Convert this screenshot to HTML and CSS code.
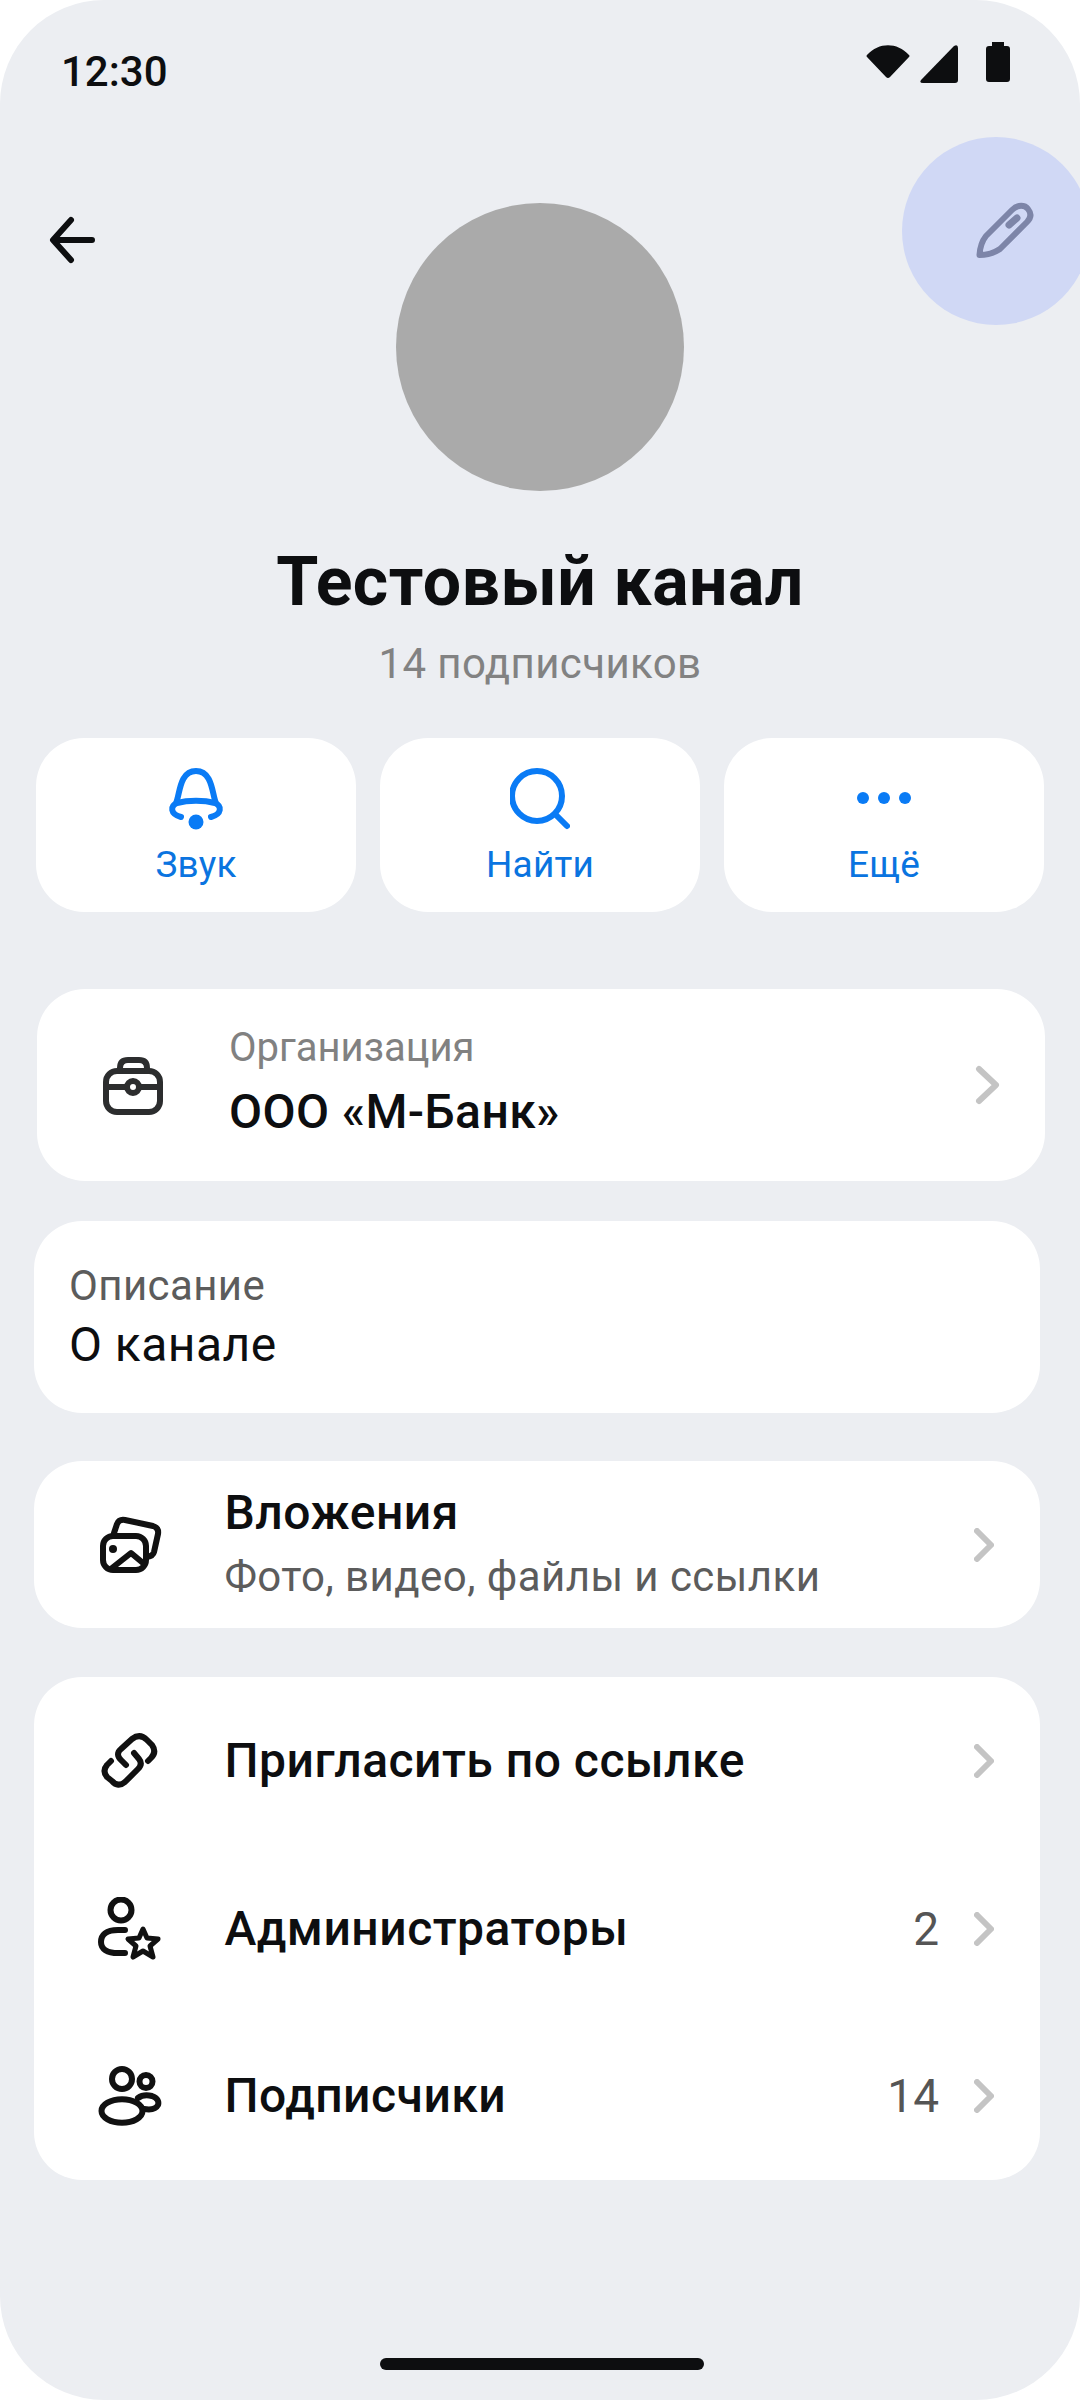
FILE: index.html
```html
<!DOCTYPE html>
<html lang="ru">
<head>
    <meta charset="UTF-8">
    <meta name="viewport" content="width=device-width, initial-scale=1.0">
    <title>Тестовый канал</title>
    <link rel="stylesheet" href="styles.css">
</head>
<body>
    <div class="screen">
        <header class="status-bar">
            <span class="time">12:30</span>
            <div class="status-icons">
                <svg width="44" height="36" viewBox="0 0 44 36"><path d="M1 11 C13 -2 31 -2 43 11 Q44 12 43 13 L24 33 Q22 35 20 33 L1 13 Q0 12 1 11Z" fill="#0d0e10"/></svg>
                <svg width="38" height="38" viewBox="0 0 38 38"><path d="M34 1 Q38 -1 38 3 V35 Q38 38 35 38 H3 Q-1 38 1 35Z" fill="#0d0e10"/></svg>
                <svg width="24" height="40" viewBox="0 0 24 40"><path d="M6 0 H18 V4 H21 Q24 4 24 7 V37 Q24 40 21 40 H3 Q0 40 0 37 V7 Q0 4 3 4 H6Z" fill="#0d0e10"/></svg>
            </div>
        </header>

        <section class="profile">
            <button class="back-btn">
                <svg width="48" height="48" viewBox="0 0 48 48" fill="none" stroke="#0d0e10" stroke-width="6" stroke-linecap="round" stroke-linejoin="round"><path d="M44 24 H6 M23 4 L5 24 L23 44"/></svg>
            </button>
            <div class="edit-btn">
                <svg width="58" height="58" viewBox="0 0 58 58" fill="none" stroke="#7d85a8" stroke-width="6" stroke-linecap="round" stroke-linejoin="round"><path d="M3.5 53 C4 44 6 39 10 34 L36 8 C42 2 49 3 52 7 C56 12 55 16 51 20 L24 47 C18 51 11 53 3.5 53Z"/><path d="M33 23 L41 16" stroke-width="7"/></svg>
            </div>
            <div class="avatar"></div>
            <h1 class="channel-name">Тестовый канал</h1>
            <p class="subs">14 подписчиков</p>
        </section>

        <nav class="actions">
            <a class="action">
                <svg width="60" height="62" viewBox="0 0 60 62" fill="none" stroke="#0a7bf5" stroke-width="6" stroke-linecap="round" stroke-linejoin="round"><path d="M10 35 C14 27 13 3 30 3 C47 3 46 27 50 35"/><path d="M15 49 C4 46 4 38 11 35 C22 32 38 32 49 35 C56 38 56 46 45 49"/><circle cx="30" cy="54" r="7.5" fill="#0a7bf5" stroke="none"/></svg>
                <span>Звук</span>
            </a>
            <a class="action">
                <svg width="60" height="62" viewBox="0 0 60 62" fill="none" stroke="#0a7bf5" stroke-width="6" stroke-linecap="round"><circle cx="27" cy="28" r="25"/><path d="M45 46 L57 58"/></svg>
                <span>Найти</span>
            </a>
            <a class="action">
                <svg width="60" height="62" viewBox="0 0 60 62" fill="#0a7bf5"><circle cx="9" cy="30" r="6"/><circle cx="30" cy="30" r="6"/><circle cx="51" cy="30" r="6"/></svg>
                <span>Ещё</span>
            </a>
        </nav>

        <a class="card org-card">
            <svg class="org-icon" width="60" height="60" viewBox="0 0 60 60" fill="none" stroke="#2c2d2e" stroke-width="6" stroke-linecap="round"><rect x="3" y="16" width="54" height="41" rx="11"/><path d="M17 16 V13 Q17 5 25 5 H36 Q44 5 44 13 V16"/><path d="M3 32 H22 M38 32 H57"/><circle cx="30" cy="32" r="6"/></svg>
            <div class="org-text">
                <span class="org-label">Организация</span>
                <span class="org-name">ООО «М-Банк»</span>
            </div>
            <svg class="chevron" width="26" height="40" viewBox="0 0 26 40"><path d="M4 4 L21 20 L4 36"/></svg>
        </a>

        <div class="card about-card">
            <span class="about-label">Описание</span>
            <span class="about-text">О канале</span>
        </div>

        <a class="card media-card">
            <svg class="row-icon" width="62" height="58" viewBox="0 0 62 58" fill="none" stroke="#111" stroke-width="6" stroke-linecap="round" stroke-linejoin="round"><rect x="4" y="20" width="43" height="34" rx="10"/><path d="M15 17 L18 8 Q20 3 26 4 L54 10 Q60 12 59 18 L55 36 Q54 40 48 41"/><path d="M13 52 L32 37 L44 47"/><circle cx="14" cy="33" r="4" fill="#111" stroke="none"/></svg>
            <div class="row-text">
                <span class="row-title">Вложения</span>
                <span class="row-sub">Фото, видео, файлы и ссылки</span>
            </div>
            <svg class="chevron chevron-sm" width="20" height="34" viewBox="0 0 20 34"><path d="M3 3 L17 17 L3 31"/></svg>
        </a>

        <div class="card list-card">
            <a class="row">
                <svg class="row-icon" width="62" height="58" viewBox="0 0 58 58" fill="none" stroke="#111" stroke-width="6" stroke-linecap="round" stroke-linejoin="round"><path d="M25 33 L20 28 Q14 22 20 17 L31 7 Q39 1 46 8 L51 13 Q56 20 50 26 L47 29"/><path d="M33 21 L38 27 Q42 32 37 37 L24 50 Q17 56 11 49 L6 45 Q1 39 6 33 L10 29"/></svg>
                <span class="row-title">Пригласить по ссылке</span>
                <svg class="chevron chevron-sm" width="20" height="34" viewBox="0 0 20 34"><path d="M3 3 L17 17 L3 31"/></svg>
            </a>
            <a class="row">
                <svg class="row-icon" width="64" height="64" viewBox="0 0 64 64" fill="none" stroke="#111" stroke-width="6" stroke-linecap="round" stroke-linejoin="round"><circle cx="23" cy="13" r="10.5"/><path d="M27 33 H20 C8 33 3 38 3 45 C3 52 9 56 20 56 H27"/><path d="M45 32 L49 41 L60 42 L52 49 L55 60 L45 54 L35 60 L38 49 L30 42 L41 41Z" stroke-width="5"/></svg>
                <span class="row-title">Администраторы</span>
                <span class="count">2</span>
                <svg class="chevron chevron-sm" width="20" height="34" viewBox="0 0 20 34"><path d="M3 3 L17 17 L3 31"/></svg>
            </a>
            <a class="row">
                <svg class="row-icon" width="64" height="60" viewBox="0 0 64 60" fill="none" stroke="#111" stroke-width="6" stroke-linecap="round" stroke-linejoin="round"><circle cx="24" cy="13" r="10"/><circle cx="48" cy="15.5" r="6.5"/><path d="M40 32 C44 29 50 29 54 30 C60 32 61 36 60 39 C58 43 52 44 46 43"/><ellipse cx="24" cy="45" rx="20.5" ry="11.7"/></svg>
                <span class="row-title">Подписчики</span>
                <span class="count">14</span>
                <svg class="chevron chevron-sm" width="20" height="34" viewBox="0 0 20 34"><path d="M3 3 L17 17 L3 31"/></svg>
            </a>
        </div>

        <div class="home-bar"></div>
    </div>
</body>
</html>
```

FILE: styles.css
```css
body {
    font-family: 'Roboto', Arial, sans-serif;
    margin: 0;
    padding: 0;
    background-color: #fff;
    color: #0d0e10;
}

.screen {
    position: relative;
    display: flex;
    flex-direction: column;
    width: 1080px;
    height: 2400px;
    background: #eceef2;
    border-radius: 104px;
    overflow: hidden;
}

.status-bar {
    display: flex;
    justify-content: space-between;
    align-items: flex-start;
    height: 203px;
    box-sizing: border-box;
    padding: 42px 70px 0 61px;
}

.time {
    font-size: 42px;
    font-weight: 500;
    line-height: 60px;
}

.status-icons {
    display: flex;
    align-items: flex-start;
    gap: 10px;
}

.status-icons svg:nth-child(1) {
    margin-top: 2px;
}

.status-icons svg:nth-child(2) {
    margin-top: 3px;
}

.status-icons svg:nth-child(3) {
    margin-left: 18px;
}

.profile {
    position: relative;
    display: flex;
    flex-direction: column;
    align-items: center;
}

.back-btn {
    position: absolute;
    left: 48px;
    top: 13px;
    padding: 0;
    background: none;
    border: none;
    line-height: 0;
}

.edit-btn {
    position: absolute;
    left: 902px;
    top: -66px;
    width: 188px;
    height: 188px;
    border-radius: 50%;
    background: #d0d8f5;
    display: flex;
    align-items: center;
    padding-left: 74px;
    box-sizing: border-box;
}

.avatar {
    width: 288px;
    height: 288px;
    border-radius: 50%;
    background: #aaa;
}

.channel-name {
    margin: 53px 0 0;
    font-size: 68px;
    line-height: 76px;
    font-weight: 700;
    letter-spacing: 0.45px;
}

.subs {
    margin: 20px 0 0;
    font-size: 42px;
    line-height: 48px;
    letter-spacing: 0.4px;
    color: #828282;
}

.actions {
    display: flex;
    gap: 24px;
    margin: 50px 36px 0 36px;
}

.action {
    flex: 1;
    height: 174px;
    background: #fff;
    border-radius: 48px;
    display: flex;
    flex-direction: column;
    align-items: center;
    padding-top: 30px;
    box-sizing: border-box;
    color: #0a74e0;
    font-size: 37px;
    line-height: 44px;
    letter-spacing: 0.2px;
}

.action span {
    margin-top: 13px;
}

.card {
    display: flex;
    background: #fff;
    border-radius: 48px;
}

.org-card {
    align-items: center;
    height: 192px;
    margin: 77px 35px 0 37px;
    padding: 0 44px 0 66px;
}

.org-text {
    flex: 1;
    display: flex;
    flex-direction: column;
    margin-left: 66px;
    padding-bottom: 6px;
}

.org-label {
    font-size: 40px;
    line-height: 48px;
    color: #818181;
}

.org-name {
    margin-top: 12px;
    font-size: 48px;
    line-height: 56px;
    font-weight: 500;
    letter-spacing: 0.4px;
}

.about-card {
    flex-direction: column;
    justify-content: center;
    height: 192px;
    margin: 40px 40px 0 34px;
    padding-left: 35px;
}

.about-label {
    font-size: 42px;
    line-height: 50px;
    letter-spacing: 0.4px;
    color: #5c5c5c;
}

.about-text {
    margin-top: 6px;
    font-size: 48px;
    line-height: 56px;
    letter-spacing: 0.45px;
}

.media-card {
    align-items: center;
    height: 167px;
    margin: 48px 40px 0 34px;
    padding: 0 46px 0 64px;
}

.row-text {
    flex: 1;
    display: flex;
    flex-direction: column;
    padding-bottom: 3px;
}

.row-icon {
    flex: none;
    width: 64px;
    margin-right: 62.5px;
}

.row-title {
    flex: 1;
    font-size: 48px;
    line-height: 56px;
    font-weight: 500;
    letter-spacing: 0.5px;
}

.row-sub {
    margin-top: 11px;
    font-size: 42px;
    line-height: 50px;
    letter-spacing: 0.45px;
    color: #5c5c5c;
}

.list-card {
    flex-direction: column;
    height: 503px;
    margin: 49px 40px 0 34px;
}

.row {
    flex: 1;
    display: flex;
    align-items: center;
    padding: 0 46px 0 64px;
}

.count {
    margin-right: 35px;
    font-size: 46px;
    color: #555;
}

.chevron {
    flex: none;
    fill: none;
    stroke: #c4c4c4;
    stroke-width: 6;
    stroke-linecap: round;
    stroke-linejoin: round;
}

.home-bar {
    position: absolute;
    left: 380px;
    top: 2358px;
    width: 324px;
    height: 12px;
    border-radius: 6px;
    background: #0d0e10;
}
```
